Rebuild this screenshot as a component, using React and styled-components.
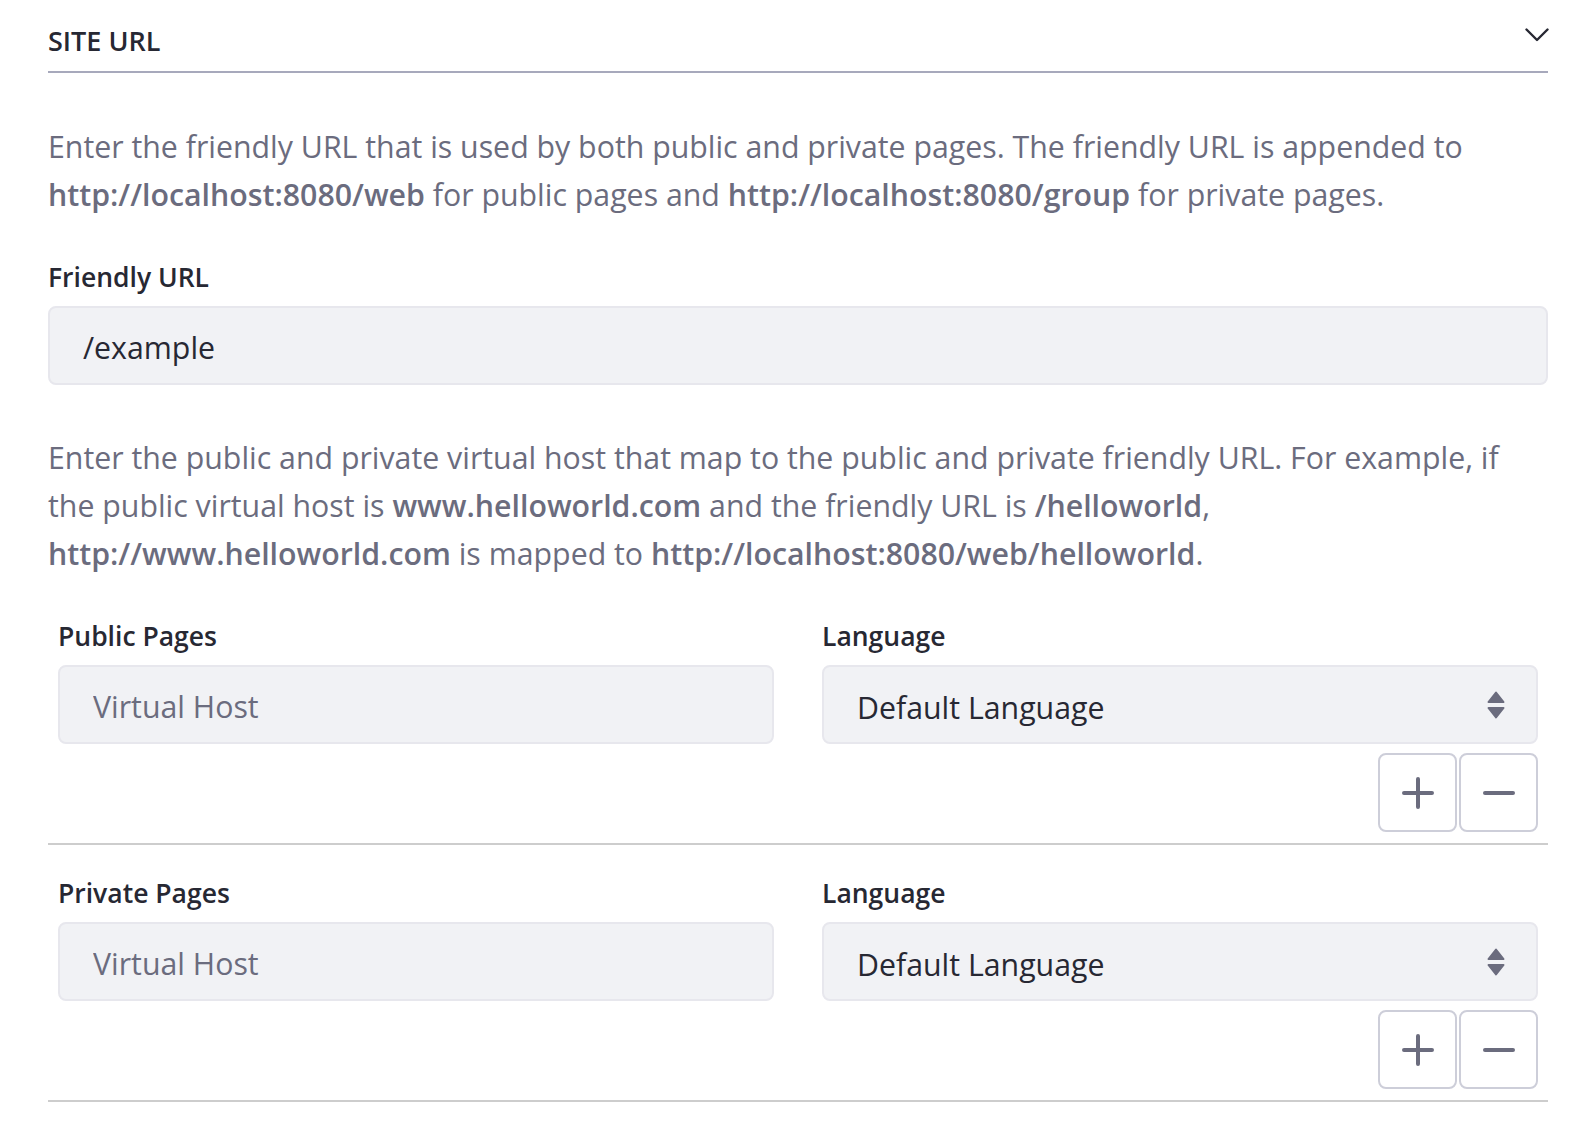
import React from 'react';
import styled, { createGlobalStyle } from 'styled-components';

const GlobalStyle = createGlobalStyle`
  body {
    margin: 0;
    background: #fff;
    font-family: 'Open Sans', 'Noto Sans', sans-serif;
    color: #272833;
  }
`;

const ChevronDown = () => (
  <svg width='24' height='14' viewBox='0 0 24 14' fill='none'>
    <path d='M1.5 1.5 L12 12 L22.5 1.5' stroke='#272833' strokeWidth='2.4' strokeLinecap='round' strokeLinejoin='round' />
  </svg>
);

const CaretDouble = () => (
  <svg width='18' height='28' viewBox='0 0 18 28'>
    <path d='M9 1.5 L16.5 11 H1.5 Z' fill='#6b6c7e' stroke='#6b6c7e' strokeWidth='2' strokeLinejoin='round' />
    <path d='M1.5 17 H16.5 L9 26.5 Z' fill='#6b6c7e' stroke='#6b6c7e' strokeWidth='2' strokeLinejoin='round' />
  </svg>
);

const PlusIcon = () => (
  <svg width='32' height='32' viewBox='0 0 32 32'>
    <path d='M16 2 V30 M2 16 H30' stroke='#6b6c7e' strokeWidth='4' strokeLinecap='round' />
  </svg>
);

const MinusIcon = () => (
  <svg width='32' height='32' viewBox='0 0 32 32'>
    <path d='M2 16 H30' stroke='#6b6c7e' strokeWidth='4' strokeLinecap='round' />
  </svg>
);

const VirtualHostBlock = ({ title }) => (
  <HostBlock>
    <HostGrid>
      <Column>
        <Label>{title}</Label>
        <Field placeholder='Virtual Host' />
      </Column>
      <Column>
        <Label>Language</Label>
        <SelectBox>
          <span>Default Language</span>
          <CaretDouble />
        </SelectBox>
        <ButtonGroup>
          <IconButton aria-label='add'>
            <PlusIcon />
          </IconButton>
          <IconButton aria-label='remove'>
            <MinusIcon />
          </IconButton>
        </ButtonGroup>
      </Column>
    </HostGrid>
  </HostBlock>
);

const App = () => {
  return (
    <Page>
      <GlobalStyle />
      <SheetHeader>
        <Title>SITE URL</Title>
        <Toggle>
          <ChevronDown />
        </Toggle>
      </SheetHeader>

      <Help>
        Enter the friendly URL that is used by both public and private pages. The friendly URL is
        appended to <strong>http://localhost:8080/web</strong> for public pages and{' '}
        <strong>http://localhost:8080/group</strong> for private pages.
      </Help>

      <FormGroup>
        <Label>Friendly URL</Label>
        <Field defaultValue='/example' />
      </FormGroup>

      <Help>
        Enter the public and private virtual host that map to the public and private friendly URL.
        For example, if the public virtual host is <strong>www.helloworld.com</strong> and the
        friendly URL is <strong>/helloworld</strong>, <strong>http://www.helloworld.com</strong> is
        mapped to <strong>http://localhost:8080/web/helloworld</strong>.
      </Help>

      <VirtualHostBlock title='Public Pages' />
      <VirtualHostBlock title='Private Pages' />
    </Page>
  );
};

export default App;

const Page = styled.div`
  padding: 0 48px 40px;
`;

const SheetHeader = styled.div`
  display: flex;
  justify-content: space-between;
  align-items: flex-start;
  padding: 20px 0 9px;
  border-bottom: 2px solid #a7a9bc;
`;

const Title = styled.h2`
  margin: 0;
  font-size: 27px;
  line-height: 42px;
  font-weight: 600;
  color: #272833;
`;

const Toggle = styled.span`
  display: flex;
  margin-top: 8px;
  margin-right: -1px;
`;

const Help = styled.p`
  margin: 50px 0 37px;
  font-size: 30.3px;
  line-height: 48px;
  color: #6b6c7e;
  strong {
    font-weight: 600;
  }
`;

const FormGroup = styled.div`
  margin-bottom: -1px;
`;

const Label = styled.label`
  display: block;
  margin-bottom: 8px;
  font-size: 26.5px;
  line-height: 42px;
  font-weight: 600;
  color: #272833;
  padding-top: 2px;
  margin-top: -2px;
`;

const Field = styled.input`
  display: block;
  box-sizing: border-box;
  width: 100%;
  height: 79px;
  padding: 4px 32px 0 33px;
  border: 2px solid #e7e7ed;
  border-radius: 8px;
  background: #f1f2f5;
  font-family: inherit;
  font-size: 30.3px;
  color: #272833;
  outline: none;
  &::placeholder {
    color: #6b6c7e;
    opacity: 1;
  }
`;

const HostBlock = styled.div`
  padding-bottom: 11px;
  margin-bottom: 27px;
  border-bottom: 2px solid #cdcdcd;
`;

const HostGrid = styled.div`
  display: grid;
  grid-template-columns: 1fr 1fr;
  column-gap: 48px;
  padding: 0 10px;
`;

const Column = styled.div`
  display: flex;
  flex-direction: column;
`;

const SelectBox = styled.div`
  box-sizing: border-box;
  display: flex;
  align-items: center;
  justify-content: space-between;
  height: 79px;
  padding: 0 32px 0 33px;
  border: 2px solid #e7e7ed;
  border-radius: 8px;
  background: #f1f2f5;
  font-size: 30.3px;
  color: #272833;
  span {
    padding-top: 5px;
  }
  svg {
    margin-right: -1px;
  }
`;

const ButtonGroup = styled.div`
  display: flex;
  justify-content: flex-end;
  gap: 2px;
  margin-top: 9px;
`;

const IconButton = styled.button`
  display: flex;
  align-items: center;
  justify-content: center;
  width: 79px;
  height: 79px;
  padding: 0;
  border: 2px solid #cdced9;
  border-radius: 8px;
  background: #fff;
  cursor: pointer;
`;
